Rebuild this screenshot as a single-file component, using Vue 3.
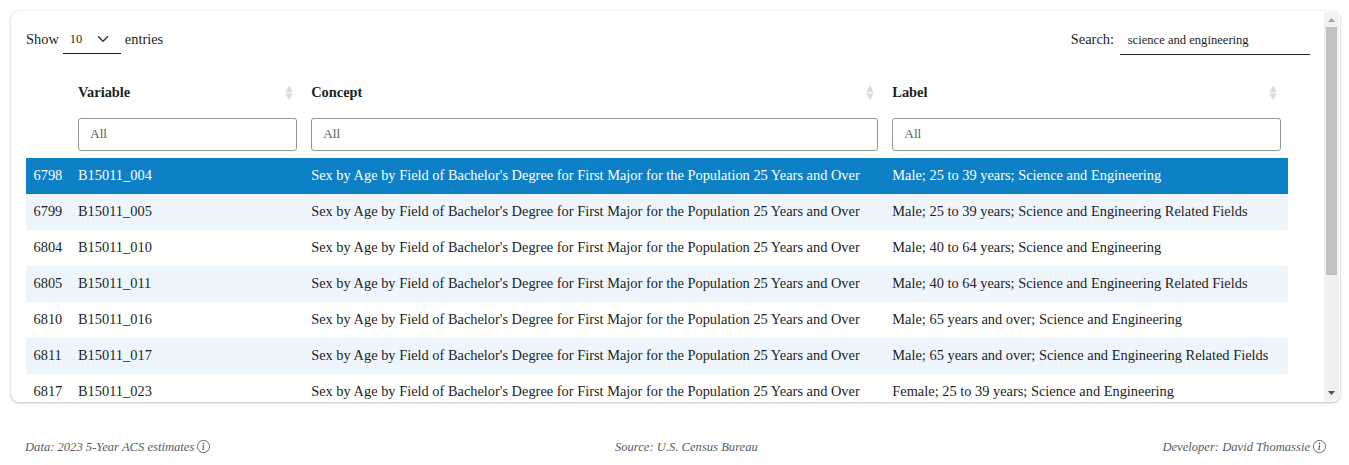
<script setup>
import { ref } from 'vue'

const query = ref('science and engineering')
const columns = ['Variable', 'Concept', 'Label']
const concept = "Sex by Age by Field of Bachelor's Degree for First Major for the Population 25 Years and Over"
const rows = [
  { id: 6798, variable: 'B15011_004', label: 'Male; 25 to 39 years; Science and Engineering' },
  { id: 6799, variable: 'B15011_005', label: 'Male; 25 to 39 years; Science and Engineering Related Fields' },
  { id: 6804, variable: 'B15011_010', label: 'Male; 40 to 64 years; Science and Engineering' },
  { id: 6805, variable: 'B15011_011', label: 'Male; 40 to 64 years; Science and Engineering Related Fields' },
  { id: 6810, variable: 'B15011_016', label: 'Male; 65 years and over; Science and Engineering' },
  { id: 6811, variable: 'B15011_017', label: 'Male; 65 years and over; Science and Engineering Related Fields' },
  { id: 6817, variable: 'B15011_023', label: 'Female; 25 to 39 years; Science and Engineering' },
]
const selected = ref(6798)
</script>

<template>
  <div class="page">
    <div class="card">
      <div class="content">
        <div class="toolbar">
          <div class="length">
            <span>Show</span>
            <div class="select">
              <span>10</span>
              <svg class="chevron" viewBox="0 0 16 16"><path d="m2 5 6 6 6-6" /></svg>
            </div>
            <span>entries</span>
          </div>
          <label class="search">
            <span>Search:</span>
            <input v-model="query" type="text" />
          </label>
        </div>

        <div class="table">
          <div class="row head">
            <div></div>
            <div v-for="name in columns" :key="name" class="heading">
              <span>{{ name }}</span>
              <svg class="sort" viewBox="0 0 8 16">
                <path d="M4 0.2 7.8 7.2H0.2zM4 15.2 0.2 8.2h7.6z" />
              </svg>
            </div>
          </div>
          <div class="row filters">
            <div></div>
            <div v-for="name in columns" :key="name" class="filter">
              <input type="text" placeholder="All" />
            </div>
          </div>
          <div
            v-for="row in rows"
            :key="row.id"
            class="row data"
            :class="{ selected: row.id === selected }"
            @click="selected = row.id"
          >
            <div class="id">{{ row.id }}</div>
            <div>{{ row.variable }}</div>
            <div>{{ concept }}</div>
            <div>{{ row.label }}</div>
          </div>
        </div>
      </div>

      <div class="scrollbar">
        <svg class="arrow" viewBox="0 0 15 15"><path class="up" d="M4 10h7L7.5 6z" /></svg>
        <div class="track"><div class="thumb"></div></div>
        <svg class="arrow" viewBox="0 0 15 15"><path class="down" d="M4 5h7L7.5 9z" /></svg>
      </div>
    </div>

    <div class="footer">
      <div>
        <span>Data: 2023 5-Year ACS estimates</span>
        <svg class="info" viewBox="0 0 16 16">
          <path d="M8 15A7 7 0 1 1 8 1a7 7 0 0 1 0 14m0 1A8 8 0 1 0 8 0a8 8 0 0 0 0 16" />
          <path d="m8.93 6.588-2.29.287-.082.38.45.083c.294.07.352.176.288.469l-.738 3.468c-.194.897.105 1.319.808 1.319.545 0 1.178-.252 1.465-.598l.088-.416c-.2.176-.492.246-.686.246-.275 0-.375-.193-.304-.533zM9 4.5a1 1 0 1 1-2 0 1 1 0 0 1 2 0" />
        </svg>
      </div>
      <div>Source: U.S. Census Bureau</div>
      <div>
        <span>Developer: David Thomassie</span>
        <svg class="info" viewBox="0 0 16 16">
          <path d="M8 15A7 7 0 1 1 8 1a7 7 0 0 1 0 14m0 1A8 8 0 1 0 8 0a8 8 0 0 0 0 16" />
          <path d="m8.93 6.588-2.29.287-.082.38.45.083c.294.07.352.176.288.469l-.738 3.468c-.194.897.105 1.319.808 1.319.545 0 1.178-.252 1.465-.598l.088-.416c-.2.176-.492.246-.686.246-.275 0-.375-.193-.304-.533zM9 4.5a1 1 0 1 1-2 0 1 1 0 0 1 2 0" />
        </svg>
      </div>
    </div>
  </div>
</template>

<style>
body {
  background: #fff;
  overflow: hidden;
}
</style>

<style scoped>
.page {
  box-sizing: border-box;
  height: 465px;
  padding: 11px 9px 0 11px;
  font-family: "Liberation Serif", "Times New Roman", serif;
  font-size: 14.4px;
  color: #1d1f21;
}
.card {
  box-sizing: border-box;
  display: flex;
  height: 391px;
  padding: 1px;
  border-radius: 8px;
  background: #fff;
  box-shadow: 0 1px 3px rgba(0, 0, 0, 0.24), 0 0 1px rgba(0, 0, 0, 0.2);
  overflow: hidden;
}
.content {
  box-sizing: border-box;
  flex: 1;
  height: 390px;
  padding: 10px 14px 0;
  overflow: hidden;
}
.toolbar {
  display: flex;
  justify-content: space-between;
  height: 54px;
}
.length {
  display: flex;
  align-items: flex-start;
  line-height: 34px;
}
.select {
  box-sizing: border-box;
  display: flex;
  justify-content: space-between;
  width: 58px;
  height: 32px;
  margin: 0 4px;
  padding: 0 12px 0 7px;
  border-bottom: 1px solid #1d1f21;
  font-size: 12.6px;
}
.chevron {
  width: 12px;
  height: 12px;
  margin-top: 11.3px;
  fill: none;
  stroke: #343a40;
  stroke-width: 2;
  stroke-linecap: round;
  stroke-linejoin: round;
}
.search {
  display: flex;
  line-height: 34px;
}
.search input {
  box-sizing: border-box;
  width: 190px;
  height: 33px;
  margin-left: 6px;
  padding: 5px 8px 0 7.7px;
  border: 0;
  border-bottom: 1px solid #1d1f21;
  outline: none;
  background: none;
  font-family: inherit;
  font-size: 12.6px;
  color: #1d1f21;
}
.table {
  width: 1262px;
}
.row {
  display: grid;
  grid-template-columns: 52px 233.2px 581.1px 395.7px;
}
.head {
  height: 42px;
  font-weight: bold;
}
.heading {
  display: flex;
  justify-content: space-between;
  padding-right: 18px;
  line-height: 33px;
}
.heading:last-child {
  padding-right: 11px;
}
.sort {
  width: 8px;
  height: 16px;
  margin-top: 8.7px;
  fill: #dcdcdc;
}
.filters {
  height: 40px;
}
.filter {
  padding-right: 14px;
}
.filter:last-child {
  padding-right: 7px;
}
.filter input {
  box-sizing: border-box;
  width: 100%;
  height: 33px;
  padding: 0 11px 2px;
  border: 1px solid #8d959e;
  border-radius: 3px;
  outline: none;
  font-family: inherit;
  font-size: 13.33px;
}
.filter input::placeholder {
  color: #595c5f;
}
.data {
  height: 36px;
  line-height: 35px;
  white-space: nowrap;
}
.data:nth-child(even) {
  background: #eef5fc;
}
.data.selected {
  background: #0d80c6;
  color: #fff;
}
.id {
  padding-left: 7.5px;
}
.scrollbar {
  display: flex;
  flex-direction: column;
  width: 15px;
  height: 389px;
  border-radius: 0 7px 7px 0;
  background: #f0f0f0;
  overflow: hidden;
}
.arrow {
  width: 15px;
  height: 15px;
}
.up {
  fill: #a3a3a3;
}
.down {
  fill: #505050;
}
.track {
  flex: 1;
  padding: 0 2px;
}
.thumb {
  height: 248px;
  background: #c1c1c1;
}
.footer {
  display: flex;
  justify-content: space-between;
  padding: 35px 14px 0;
  font-size: 12.6px;
  font-style: italic;
  line-height: 20px;
  color: #595c5f;
}
.footer > div {
  display: flex;
  gap: 3px;
}
.info {
  width: 13px;
  height: 13px;
  margin-top: 3px;
  fill: currentColor;
}
</style>
